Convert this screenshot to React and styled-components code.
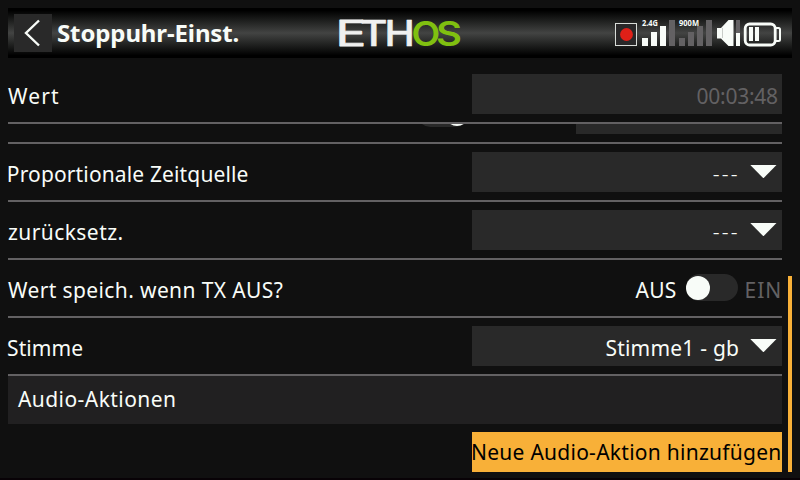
import React from "react";
import styled, { createGlobalStyle } from "styled-components";

const GlobalStyle = createGlobalStyle`
  * { box-sizing: border-box; }
  body { margin: 0; background: #101010; }
`;

const Screen = styled.div`
  width: 800px;
  height: 480px;
  padding: 8px 8px 0;
  overflow: hidden;
  background: #101010;
  border-bottom: 2px solid #080206;
  color: #f8fcf8;
  font: 400 21px/44px "Noto Sans", sans-serif;
`;

const Header = styled.header`
  display: flex;
  align-items: center;
  width: 784px;
  height: 50px;
  padding-left: 6px;
  background: linear-gradient(#000 0, #000 5%, #222322 28%, #434443 50%, #222322 72%, #000 95%, #000 100%);
`;

const BackButton = styled.button`
  display: grid;
  place-items: center;
  width: 38px;
  height: 38px;
  padding: 0;
  border: 0;
  background: #292929;
`;

const Title = styled.h1`
  width: 280.5px;
  margin: 0 0 0 5px;
  font-size: 24px;
  line-height: 50px;
  font-weight: 700;
  letter-spacing: -0.12px;
  white-space: nowrap;
`;

const Logo = styled.svg`
  flex: none;
  width: 130px;
  height: 50px;
  margin-left: -1.5px;
  overflow: visible;
  font-family: Inter, sans-serif;
  font-size: 36px;
  stroke-linejoin: round;
`;

const Status = styled.svg`
  flex: none;
  width: 170px;
  height: 50px;
  margin-left: 148px;
  font-family: "Noto Sans", sans-serif;
  font-size: 8.5px;
  font-weight: 700;
`;

const Body = styled.main`
  display: flex;
  gap: 6px;
`;

const Form = styled.div`
  width: 774px;
`;

const Row = styled.div`
  display: flex;
  justify-content: space-between;
  align-items: flex-end;
  height: ${(p) => (p.$clipped ? 20 : p.$first ? 66 : 58)}px;
  padding-bottom: 8px;
  border-bottom: 2px solid #636163;
  overflow: ${(p) => (p.$clipped ? "hidden" : "visible")};
`;

const Text = styled.span`
  height: 40px;
  margin-left: ${(p) => p.$indent || 0}px;
  letter-spacing: ${(p) => p.$spacing || 0}px;
  font-weight: ${(p) => p.$weight || 400};
  white-space: nowrap;
`;

const Field = styled.div`
  display: flex;
  justify-content: flex-end;
  flex: none;
  width: ${(p) => p.$width || 310}px;
  height: 40px;
  padding-right: ${(p) => p.$end || 0}px;
  background: #292929;
  color: ${(p) => (p.$muted ? "#636163" : "#f8fcf8")};
`;

const Arrow = styled.svg`
  flex: none;
  width: 27px;
  height: 13px;
  margin: 13px 0 0 ${(p) => p.$gap}px;
`;

const ToggleGroup = styled.div`
  display: flex;
  height: 40px;
`;

const Track = styled.span`
  display: flex;
  flex: none;
  justify-content: ${(p) => (p.$on ? "flex-end" : "flex-start")};
  align-items: center;
  width: 52px;
  height: 27px;
  margin-top: 6px;
  border-radius: 14px;
  background: #292929;
`;

const Knob = styled.span`
  width: 24px;
  height: 24px;
  border-radius: 50%;
  background: #f8fcf8;
`;

const OffLabel = styled(Text)`
  width: 50.5px;
`;

const OnLabel = styled(Text)`
  width: 37.5px;
  color: #636163;
`;

const ClippedControls = styled.div`
  display: flex;
  justify-content: space-between;
  width: 365.5px;
  height: 40px;
`;

const Section = styled.div`
  height: 48px;
  padding-left: 10px;
  line-height: 46px;
  background: #212021;
`;

const AddButton = styled.button`
  display: block;
  width: 310px;
  height: 40px;
  margin: 8px 0 0 auto;
  padding: 0;
  border: 0;
  background: #f8b038;
  color: #000;
  font: inherit;
  line-height: 41px;
  text-align: left;
`;

const ScrollThumb = styled.div`
  width: 4px;
  height: 196px;
  margin-top: 218px;
  background: #f8b038;
`;

const BAR_OFFSETS = [0, 9, 18, 27];

function Signal({ x, label, level }) {
  return (
    <g>
      {BAR_OFFSETS.map((dx, i) => (
        <rect
          key={dx}
          x={x + dx}
          y={30 - i * 6}
          width="6"
          height={8 + i * 6}
          fill={i < level ? "#f8fcf8" : "#636163"}
        />
      ))}
      <text x={x} y="18" fill="#f8fcf8" textLength={label === "900M" ? 20 : 16} lengthAdjust="spacingAndGlyphs">
        {label}
      </text>
    </g>
  );
}

function Dropdown({ value, spacing, weight, gap }) {
  return (
    <Field $end={5}>
      <Text $spacing={spacing} $weight={weight}>{value}</Text>
      <Arrow $gap={gap} viewBox="0 0 27 13">
        <path d="M.3 0H26.500L13.400 13.300Z" fill="#f8fcf8" />
      </Arrow>
    </Field>
  );
}

export default function App() {
  return (
    <Screen>
      <GlobalStyle />
      <Header>
        <BackButton aria-label="Zurück">
          <svg width="38" height="38" viewBox="0 0 38 38">
            <path d="M25 6.5L12 19L25 31.5" fill="none" stroke="#f8fcf8" strokeWidth="2.4" />
          </svg>
        </BackButton>
        <Title>Stoppuhr-Einst.</Title>
        <Logo viewBox="336 8 130 50" fill="#f0f0f0" stroke="#f0f0f0">
          <text fontWeight="400" strokeWidth=".9" transform="translate(335.4 45.8) scale(1.42 .97)">E</text>
          <text fontWeight="500" strokeWidth=".5" transform="translate(359.9 45.8) scale(1.17 .97)">T</text>
          <text fontWeight="500" strokeWidth=".5" transform="translate(384.4 45.8) scale(1.13 .97)">H</text>
          <text fontWeight="600" fill="#80c010" stroke="none" transform="translate(411.4 45.6) scale(1.04 .95)">O</text>
          <text fontWeight="600" fill="#80c010" stroke="none" transform="translate(436 45.6) scale(1.11 .95)">S</text>
        </Logo>
        <Status viewBox="614 8 170 50">
          <rect x="615.5" y="23.5" width="21" height="22" fill="#292829" stroke="#d8dcd8" />
          <circle cx="626.5" cy="34.5" r="6.4" fill="#e02018" />
          <g transform="translate(0 8)">
            <Signal x={642} label="2.4G" level={3} />
            <Signal x={679} label="900M" level={0} />
          </g>
          <path d="M717 28H721L728.500 20H733.500V46H728.500L721 38.500H717Z" fill="#f8fcf8" />
          <path d="M722.500 28V38" stroke="#c8ccc8" />
          <rect x="736" y="20" width="4" height="13" fill="#636163" />
          <rect x="736" y="33" width="4" height="13" fill="#f8fcf8" />
          <rect x="745.200" y="24" width="30" height="21" rx="4.500" fill="none" stroke="#f8fcf8" strokeWidth="2.800" />
          <path d="M776 28H778.500Q780 28 780 29.500V39.500Q780 41 778.500 41H776" fill="none" stroke="#f8fcf8" strokeWidth="2" />
          <rect x="749" y="27" width="4" height="14" fill="#f8fcf8" />
          <rect x="755" y="27" width="4" height="14" fill="#f8fcf8" />
        </Status>
      </Header>
      <Body>
        <Form>
          <Row $first>
            <Text $spacing={1.1}>Wert</Text>
            <Field $muted $end={4.2}>
              <Text $spacing={-0.25}>00:03:48</Text>
            </Field>
          </Row>
          <Row $clipped>
            <span />
            <ClippedControls>
              <Track $on>
                <Knob />
              </Track>
              <Field $width={206} />
            </ClippedControls>
          </Row>
          <Row>
            <Text $indent={-1.2} $spacing={0.14}>Proportionale Zeitquelle</Text>
            <Dropdown value="---" spacing={2.3} weight={300} gap={10.2} />
          </Row>
          <Row>
            <Text $spacing={0.43}>zurücksetz.</Text>
            <Dropdown value="---" spacing={2.3} weight={300} gap={10.2} />
          </Row>
          <Row>
            <Text $spacing={0.38}>Wert speich. wenn TX AUS?</Text>
            <ToggleGroup>
              <OffLabel $spacing={0.3}>AUS</OffLabel>
              <Track>
                <Knob />
              </Track>
              <OnLabel $indent={6.5} $spacing={1}>EIN</OnLabel>
            </ToggleGroup>
          </Row>
          <Row>
            <Text $indent={-1} $spacing={0.1}>Stimme</Text>
            <Dropdown value="Stimme1 - gb" spacing={0.22} gap={10.8} />
          </Row>
          <Section>
            <Text $spacing={0.43}>Audio-Aktionen</Text>
          </Section>
          <AddButton>
            <Text $indent={-1} $spacing={0.26}>Neue Audio-Aktion hinzufügen</Text>
          </AddButton>
        </Form>
        <ScrollThumb />
      </Body>
    </Screen>
  );
}
